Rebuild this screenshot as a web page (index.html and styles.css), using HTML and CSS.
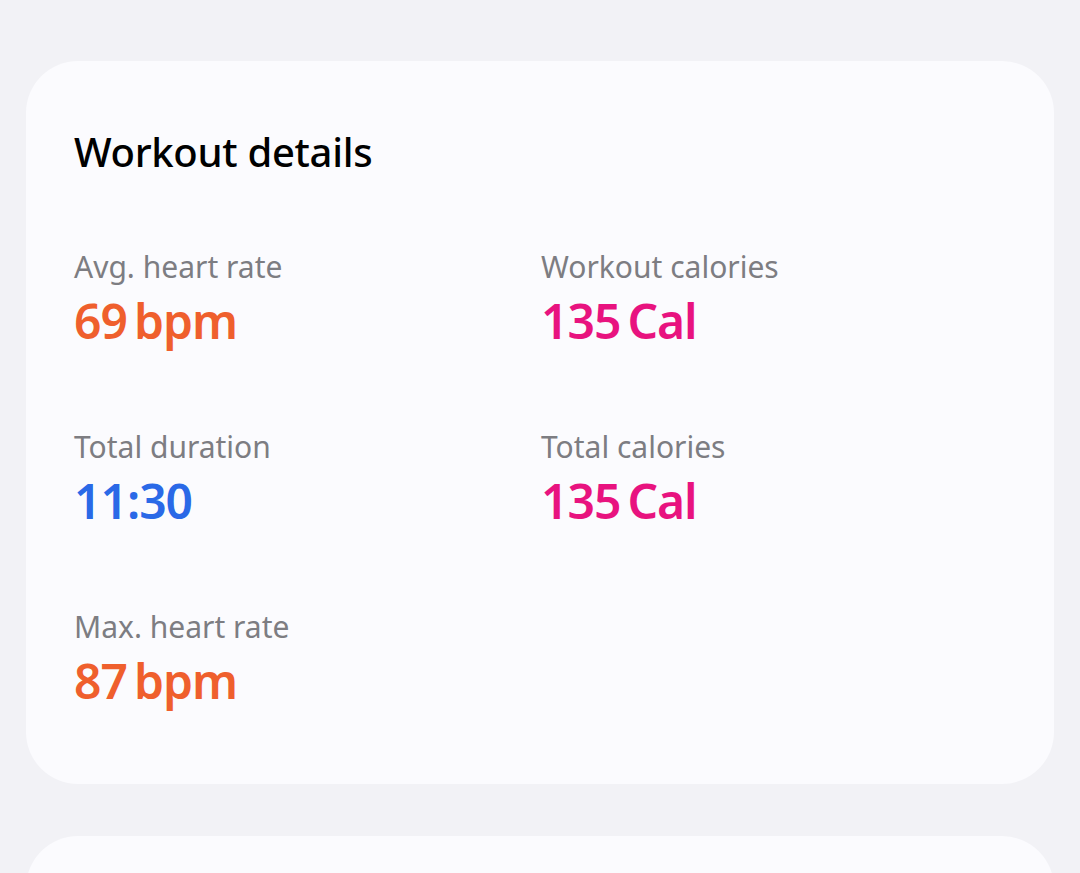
FILE: index.html
```html
<html>
<head>
<title>Workout details</title>
<link rel="stylesheet" href="styles.css">
</head>
<body>
<div class="card">
    <h2 class="cardTitle">Workout details</h2>
    <div class="stats">
        <div class="stat">
            <p class="label">Avg. heart rate</p>
            <p class="value heart">69<span class="unit">bpm</span></p>
        </div>
        <div class="stat">
            <p class="label">Workout calories</p>
            <p class="value cal">135<span class="unit">Cal</span></p>
        </div>
        <div class="stat">
            <p class="label">Total duration</p>
            <p class="value time">11:30</p>
        </div>
        <div class="stat">
            <p class="label">Total calories</p>
            <p class="value cal">135<span class="unit">Cal</span></p>
        </div>
        <div class="stat">
            <p class="label">Max. heart rate</p>
            <p class="value heart">87<span class="unit">bpm</span></p>
        </div>
    </div>
</div>
<div class="card next"></div>
</body>
</html>
```

FILE: styles.css
```css
body,div,h2,p{margin:0;padding:0;}
body{background:#f2f2f6;font-family:"Noto Sans","Open Sans",sans-serif;padding:61px 26px 0;overflow:hidden;height:812px;}
.card{background:#fbfbfe;border-radius:52px;padding:66px 48px 71px;}
.card.next{margin-top:52px;height:200px;padding:0;}
.cardTitle{font-size:40px;font-weight:500;color:#000;line-height:50px;letter-spacing:-0.3px;}
.stats{display:grid;grid-template-columns:467px 1fr;row-gap:76px;margin-top:72px;}
.label{font-size:30px;color:#7d7d82;line-height:36px;}
.value{font-size:48px;font-weight:600;line-height:64px;margin-top:4px;letter-spacing:-1px;}
.unit{margin-left:7px;}
.heart{color:#ef5f2d;}
.cal{color:#e8137f;}
.time{color:#2a69e7;}
```
